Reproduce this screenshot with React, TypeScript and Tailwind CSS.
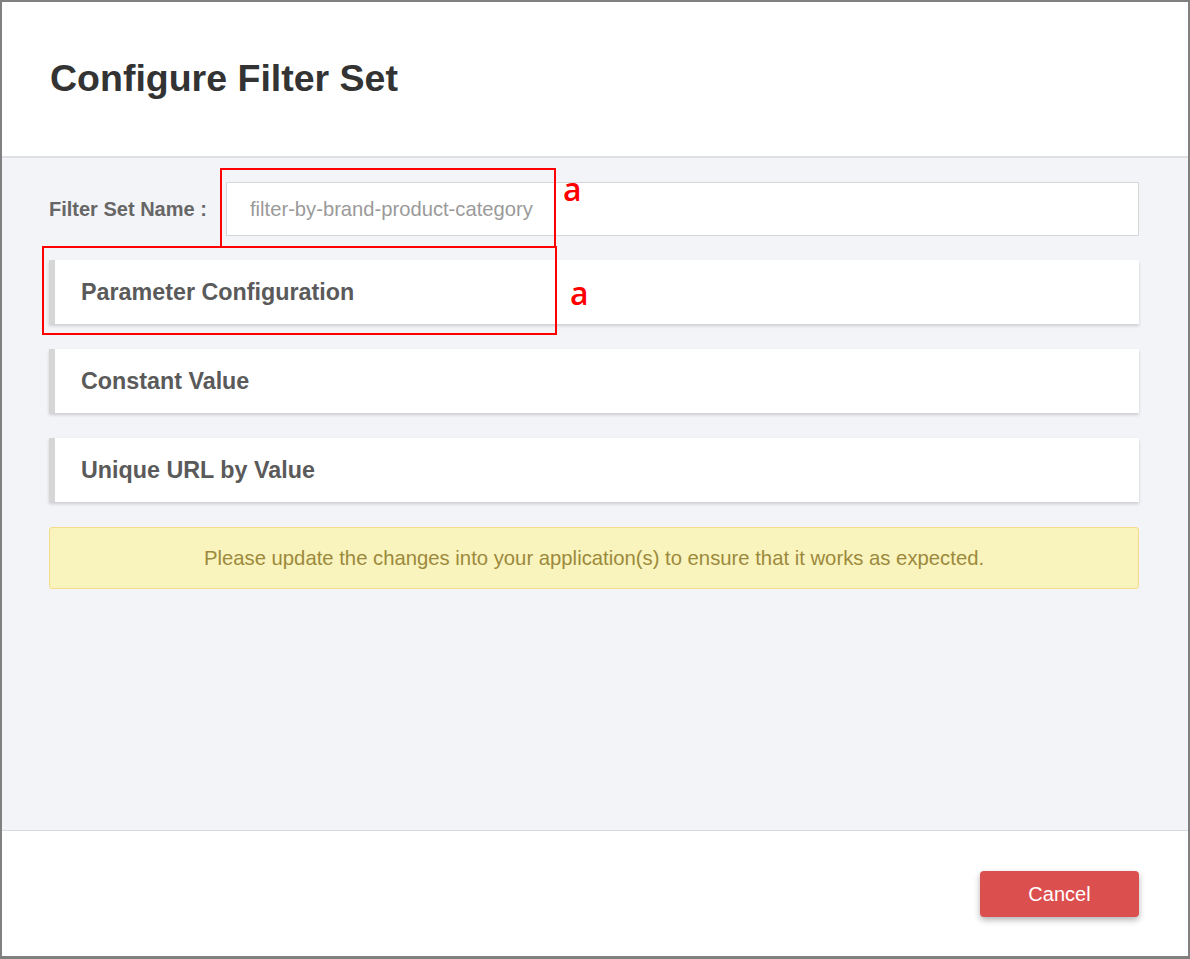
const panels = ['Parameter Configuration', 'Constant Value', 'Unique URL by Value']

export default function App() {
  return (
    <div className="relative w-[1190px] h-[959px] flex flex-col bg-white border-2 border-b-[3px] border-[#808080] font-['Liberation_Sans',Arial,sans-serif]">
      {/* Header */}
      <div className="h-[156px] shrink-0 flex items-center pl-12 border-b-2 border-[#dfe0e3]">
        <h1 className="text-[37.5px] font-bold text-[#333] leading-none pb-[1px]">Configure Filter Set</h1>
      </div>

      {/* Body */}
      <div className="flex-1 bg-[#f3f4f8] pt-6 pl-[47px] pr-[49px]">
        <div className="flex items-center">
          <label className="w-[177px] shrink-0 text-[20px] font-bold text-[#666]">Filter Set Name :</label>
          <input
            className="flex-1 h-[54px] bg-white border border-[#d6d6d6] pl-[23px] text-[20.2px] text-[#555] placeholder:text-[#9a9a9a] outline-none"
            placeholder="filter-by-brand-product-category"
          />
        </div>

        <div className="mt-6 flex flex-col gap-[25px]">
          {panels.map((p) => (
            <div
              key={p}
              className="h-[64px] flex items-center bg-white border-l-[6px] border-[#d6d6d6] pl-[26px] shadow-[0_2px_3px_rgba(0,0,0,0.16)]"
            >
              <span className="text-[23.3px] font-bold text-[#5a5a5a]">{p}</span>
            </div>
          ))}
        </div>

        <div className="mt-[25px] h-[62px] flex items-center justify-center bg-[#f9f3bd] border border-[#f5dc88] rounded-[3px]">
          <p className="text-[20.3px] text-[#9c8a3c]">
            Please update the changes into your application(s) to ensure that it works as expected.
          </p>
        </div>
      </div>

      {/* Footer */}
      <div className="h-[126px] shrink-0 border-t border-[#d8d9dc] flex items-center justify-end pr-[49px]">
        <button className="w-[159px] h-[46px] rounded-[4px] bg-[#dc4f4f] text-white text-[20px] shadow-[0_3px_6px_rgba(0,0,0,0.3)]">
          Cancel
        </button>
      </div>

      {/* Annotations */}
      <div className="absolute left-[218px] top-[166px] w-[336px] h-[80px] border-2 border-[#ff0000]" />
      <div className="absolute left-[40px] top-[244px] w-[515px] h-[89px] border-2 border-[#ff0000]" />
      <span className="absolute left-[561px] top-[171px] text-[32px] leading-none font-semibold text-[#ff0000] font-['Open_Sans',sans-serif]">a</span>
      <span className="absolute left-[568px] top-[275px] text-[32px] leading-none font-semibold text-[#ff0000] font-['Open_Sans',sans-serif]">a</span>
    </div>
  )
}
